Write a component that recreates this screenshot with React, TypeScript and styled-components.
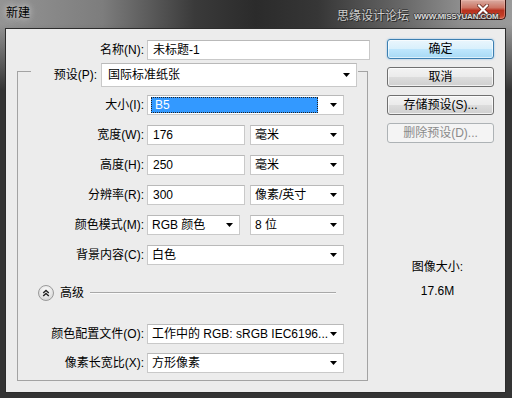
import React from 'react';
import styled, { createGlobalStyle, css } from 'styled-components';

const GlobalStyle = createGlobalStyle`
  html, body { margin: 0; padding: 0; background: #2f2f2f; }
  body {
    font-family: "Liberation Sans", "Noto Sans CJK SC", sans-serif;
    font-size: 12px;
    color: #000;
  }
  * { box-sizing: border-box; }
`;

const Window = styled.div`
  position: relative;
  width: 512px;
  height: 398px;
  display: flex;
  flex-direction: column;
  overflow: hidden;
  background:
    linear-gradient(to bottom, rgba(52, 52, 52, 0) 24px, rgba(52, 52, 52, 1) 90px),
    linear-gradient(to right, #949494 0%, #7d7d7d 20%, #3a3a3a 38%, #2b2b2b 50%, #363636 62%, #666 78%, #8e8e8e 90%, #9a9a9a 100%);
`;

const TitleBar = styled.div`
  height: 28px;
  flex: none;
  display: flex;
  align-items: flex-start;
  padding-left: 6px;
`;

const TitleText = styled.div`
  margin-top: 6px;
  font-size: 12px;
  line-height: 14px;
  color: #000;
  text-shadow: 0 0 6px rgba(230, 230, 230, 0.8), 0 0 10px rgba(220, 220, 220, 0.6);
  flex: 1;
`;

const CloseButton = styled.div`
  width: 46px;
  height: 20px;
  margin-right: 6px;
  border: 1px solid #3a1410;
  border-top: none;
  border-radius: 0 0 5px 5px;
  background: linear-gradient(#d9aca2 0%, #cc7565 40%, #b7321f 55%, #c23c26 80%, #d2604a 100%);
  box-shadow: inset 0 0 0 1px rgba(255, 200, 190, 0.35);
  display: flex;
  align-items: center;
  justify-content: center;
`;

const Watermark = styled.div`
  position: absolute;
  top: 8px;
  left: 337px;
  display: flex;
  align-items: center;
  gap: 5px;
  pointer-events: none;
`;

const WatermarkCn = styled.span`
  font-family: "Noto Sans CJK SC", sans-serif;
  font-size: 12px;
  line-height: 14px;
  color: #cfcfcf;
  text-shadow: 1px 1px 0 #2a2a2a, -1px 0 0 #3a3a3a, 0 -1px 0 #3a3a3a;
`;

const WatermarkEn = styled.span`
  font-family: "Liberation Sans", sans-serif;
  font-weight: bold;
  font-size: 8px;
  line-height: 10px;
  letter-spacing: -0.2px;
  color: #d8d8d8;
  margin-top: 3px;
  text-shadow: 1px 1px 0 #2a2a2a, -1px 0 0 #444, 0 -1px 0 #444;
`;

const Frame = styled.div`
  flex: 1;
  display: flex;
  padding: 0 6px 5px 5px;
`;

const Content = styled.div`
  flex: 1;
  display: flex;
  background: #ececec;
  border: 1px solid #2c2c2c;
`;

const LeftPane = styled.div`
  width: 365px;
  padding: 11px 0 0 11px;
  display: flex;
  flex-direction: column;
`;

const RightPane = styled.div`
  padding: 10px 0 0 16px;
  display: flex;
  flex-direction: column;
  gap: 8px;
`;

const NameRow = styled.div`
  display: grid;
  grid-template-columns: 127px 223px;
  column-gap: 3px;
  align-items: center;
`;

const Label = styled.div`
  text-align: right;
  white-space: nowrap;
  line-height: 20px;
`;

const fieldBase = css`
  background: #fff;
  border: 1px solid #c9c9c9;
  border-top-color: #b9b9b9;
  height: 20px;
  line-height: 18px;
  white-space: nowrap;
  overflow: hidden;
`;

const TextInput = styled.div<{ $w: number }>`
  ${fieldBase};
  width: ${(p) => p.$w}px;
  padding-left: 5px;
`;

const SelectBox = styled.div<{ $w: number; $h?: number }>`
  ${fieldBase};
  width: ${(p) => p.$w}px;
  height: ${(p) => p.$h ?? 20}px;
  line-height: ${(p) => (p.$h ?? 20) - 2}px;
  display: flex;
  align-items: center;
  padding: 0 6px 0 ${(p) => (p.$h ? 6 : 4)}px;
`;

const SelectValue = styled.span`
  flex: 1;
  overflow: hidden;
`;

const Highlight = styled.span`
  flex: 1;
  align-self: stretch;
  margin: 1px 12px 1px -1px;
  background: #3399ff;
  color: #fff;
  outline: 1px dotted #222;
  outline-offset: -1px;
  padding-left: 4px;
  line-height: 16px;
`;

const Arrow = () => (
  <svg width="7" height="4" viewBox="0 0 7 4" style={{ flex: 'none' }}>
    <path d="M0 0 H7 L3.5 4 Z" fill="#000" />
  </svg>
);

const Group = styled.div`
  margin-top: 3px;
  width: 351px;
  display: flex;
  flex-direction: column;
`;

const GroupHeader = styled.div`
  height: 24px;
  display: flex;
  align-items: center;
`;

const Corner = styled.div<{ $side: 'left' | 'right'; $w: number }>`
  width: ${(p) => p.$w}px;
  align-self: stretch;
  margin-top: 8px;
  border-top: 1px solid #a3a3a3;
  ${(p) =>
    p.$side === 'left'
      ? css`border-left: 1px solid #a3a3a3;`
      : css`border-right: 1px solid #a3a3a3;`}
`;

const HeaderLabel = styled.div`
  flex: 1;
  text-align: right;
  padding-right: 4px;
  line-height: 20px;
`;

const GroupBody = styled.div`
  border: 1px solid #a3a3a3;
  border-top: none;
  padding: 8px 0 7px 0;
  display: flex;
  flex-direction: column;
`;

const FormGrid = styled.div<{ $gap: number; $mt?: number }>`
  display: grid;
  grid-template-columns: 126px 197px;
  column-gap: 3px;
  row-gap: ${(p) => p.$gap}px;
  margin-top: ${(p) => p.$mt ?? 0}px;
  align-items: center;
`;

const Controls = styled.div<{ $gap: number }>`
  display: flex;
  gap: ${(p) => p.$gap}px;
`;

const AdvancedRow = styled.div`
  margin-top: 20px;
  height: 16px;
  display: flex;
  align-items: center;
  padding-left: 20px;
  padding-right: 31px;
`;

const AdvancedText = styled.span`
  margin-left: 6px;
  line-height: 16px;
`;

const Rule = styled.div`
  flex: 1;
  height: 2px;
  margin-left: 6px;
  border-top: 1px solid #a8a8a8;
  border-bottom: 1px solid #fafafa;
`;

const Button = styled.div<{ $variant?: 'default' | 'disabled' }>`
  width: 107px;
  height: 20px;
  border-radius: 3px;
  border: 1px solid #707070;
  background: linear-gradient(#f3f3f3 0%, #ebebeb 48%, #dcdcdc 52%, #cfcfcf 100%);
  box-shadow: inset 0 0 0 1px rgba(255, 255, 255, 0.7);
  text-align: center;
  line-height: 18px;
  color: #000;
  white-space: nowrap;
  ${(p) =>
    p.$variant === 'default' &&
    css`
      border-color: #3c7fb1;
      background: linear-gradient(#eaf6fd 0%, #d9f0fc 48%, #bee6fd 52%, #a7d9f5 100%);
      box-shadow: inset 0 0 0 1px rgba(255, 255, 255, 0.6), 0 0 2px rgba(60, 150, 220, 0.6);
    `}
  ${(p) =>
    p.$variant === 'disabled' &&
    css`
      border-color: #adb2b5;
      background: #f4f4f4;
      box-shadow: none;
      color: #8a8a8a;
    `}
`;

const InfoBlock = styled.div`
  margin-top: 104px;
  width: 107px;
  text-align: center;
  line-height: 24px;
  padding-right: 6px;
`;

const AdvancedIcon = () => (
  <svg width="16" height="16" viewBox="0 0 16 16" style={{ flex: 'none' }}>
    <defs>
      <radialGradient id="advg" cx="50%" cy="35%" r="65%">
        <stop offset="0%" stopColor="#ffffff" />
        <stop offset="100%" stopColor="#d6d6d6" />
      </radialGradient>
    </defs>
    <circle cx="8" cy="8" r="7.5" fill="url(#advg)" stroke="#9a9a9a" />
    <path d="M5.2 8 L8 5.4 L10.8 8 M5.2 11 L8 8.4 L10.8 11" fill="none" stroke="#222" strokeWidth="1.4" />
  </svg>
);

const CloseX = () => (
  <svg width="12" height="11" viewBox="0 0 12 11">
    <path d="M2 1.5 L10 9.5 M10 1.5 L2 9.5" stroke="#5a1a10" strokeWidth="3.6" strokeLinecap="square" />
    <path d="M2 1.5 L10 9.5 M10 1.5 L2 9.5" stroke="#fff" strokeWidth="2.2" strokeLinecap="square" />
  </svg>
);

type Row = { label: string; control: React.ReactNode };

const rowsMain: Row[] = [
  {
    label: '大小(I):',
    control: (
      <SelectBox $w={197}>
        <Highlight>B5</Highlight>
        <Arrow />
      </SelectBox>
    ),
  },
  {
    label: '宽度(W):',
    control: (
      <Controls $gap={5}>
        <TextInput $w={98}>176</TextInput>
        <SelectBox $w={94}>
          <SelectValue>毫米</SelectValue>
          <Arrow />
        </SelectBox>
      </Controls>
    ),
  },
  {
    label: '高度(H):',
    control: (
      <Controls $gap={5}>
        <TextInput $w={98}>250</TextInput>
        <SelectBox $w={94}>
          <SelectValue>毫米</SelectValue>
          <Arrow />
        </SelectBox>
      </Controls>
    ),
  },
  {
    label: '分辨率(R):',
    control: (
      <Controls $gap={5}>
        <TextInput $w={98}>300</TextInput>
        <SelectBox $w={94}>
          <SelectValue>像素/英寸</SelectValue>
          <Arrow />
        </SelectBox>
      </Controls>
    ),
  },
  {
    label: '颜色模式(M):',
    control: (
      <Controls $gap={10}>
        <SelectBox $w={93}>
          <SelectValue>RGB 颜色</SelectValue>
          <Arrow />
        </SelectBox>
        <SelectBox $w={94}>
          <SelectValue>8 位</SelectValue>
          <Arrow />
        </SelectBox>
      </Controls>
    ),
  },
  {
    label: '背景内容(C):',
    control: (
      <SelectBox $w={197}>
        <SelectValue>白色</SelectValue>
        <Arrow />
      </SelectBox>
    ),
  },
];

const rowsAdvanced: Row[] = [
  {
    label: '颜色配置文件(O):',
    control: (
      <SelectBox $w={197}>
        <SelectValue>工作中的 RGB: sRGB IEC6196...</SelectValue>
        <Arrow />
      </SelectBox>
    ),
  },
  {
    label: '像素长宽比(X):',
    control: (
      <SelectBox $w={197}>
        <SelectValue>方形像素</SelectValue>
        <Arrow />
      </SelectBox>
    ),
  },
];

const renderRows = (rows: Row[]) =>
  rows.map((r) => (
    <React.Fragment key={r.label}>
      <Label>{r.label}</Label>
      {r.control}
    </React.Fragment>
  ));

export default function App() {
  return (
    <>
      <GlobalStyle />
      <Window>
        <TitleBar>
          <TitleText>新建</TitleText>
          <CloseButton>
            <CloseX />
          </CloseButton>
        </TitleBar>
        <Watermark>
          <WatermarkCn>思缘设计论坛</WatermarkCn>
          <WatermarkEn>WWW.MISSYUAN.COM</WatermarkEn>
        </Watermark>
        <Frame>
          <Content>
            <LeftPane>
              <NameRow>
                <Label>名称(N):</Label>
                <TextInput $w={223}>未标题-1</TextInput>
              </NameRow>
              <Group>
                <GroupHeader>
                  <Corner $side="left" $w={14} />
                  <HeaderLabel>预设(P):</HeaderLabel>
                  <SelectBox $w={256} $h={24} style={{ marginRight: 1 }}>
                    <SelectValue>国际标准纸张</SelectValue>
                    <Arrow />
                  </SelectBox>
                  <Corner $side="right" $w={10} />
                </GroupHeader>
                <GroupBody>
                  <FormGrid $gap={10}>{renderRows(rowsMain)}</FormGrid>
                  <AdvancedRow>
                    <AdvancedIcon />
                    <AdvancedText>高级</AdvancedText>
                    <Rule />
                  </AdvancedRow>
                  <FormGrid $gap={9} $mt={23}>
                    {renderRows(rowsAdvanced)}
                  </FormGrid>
                </GroupBody>
              </Group>
            </LeftPane>
            <RightPane>
              <Button $variant="default">确定</Button>
              <Button>取消</Button>
              <Button>存储预设(S)...</Button>
              <Button $variant="disabled">删除预设(D)...</Button>
              <InfoBlock>
                图像大小:
                <br />
                17.6M
              </InfoBlock>
            </RightPane>
          </Content>
        </Frame>
      </Window>
    </>
  );
}
